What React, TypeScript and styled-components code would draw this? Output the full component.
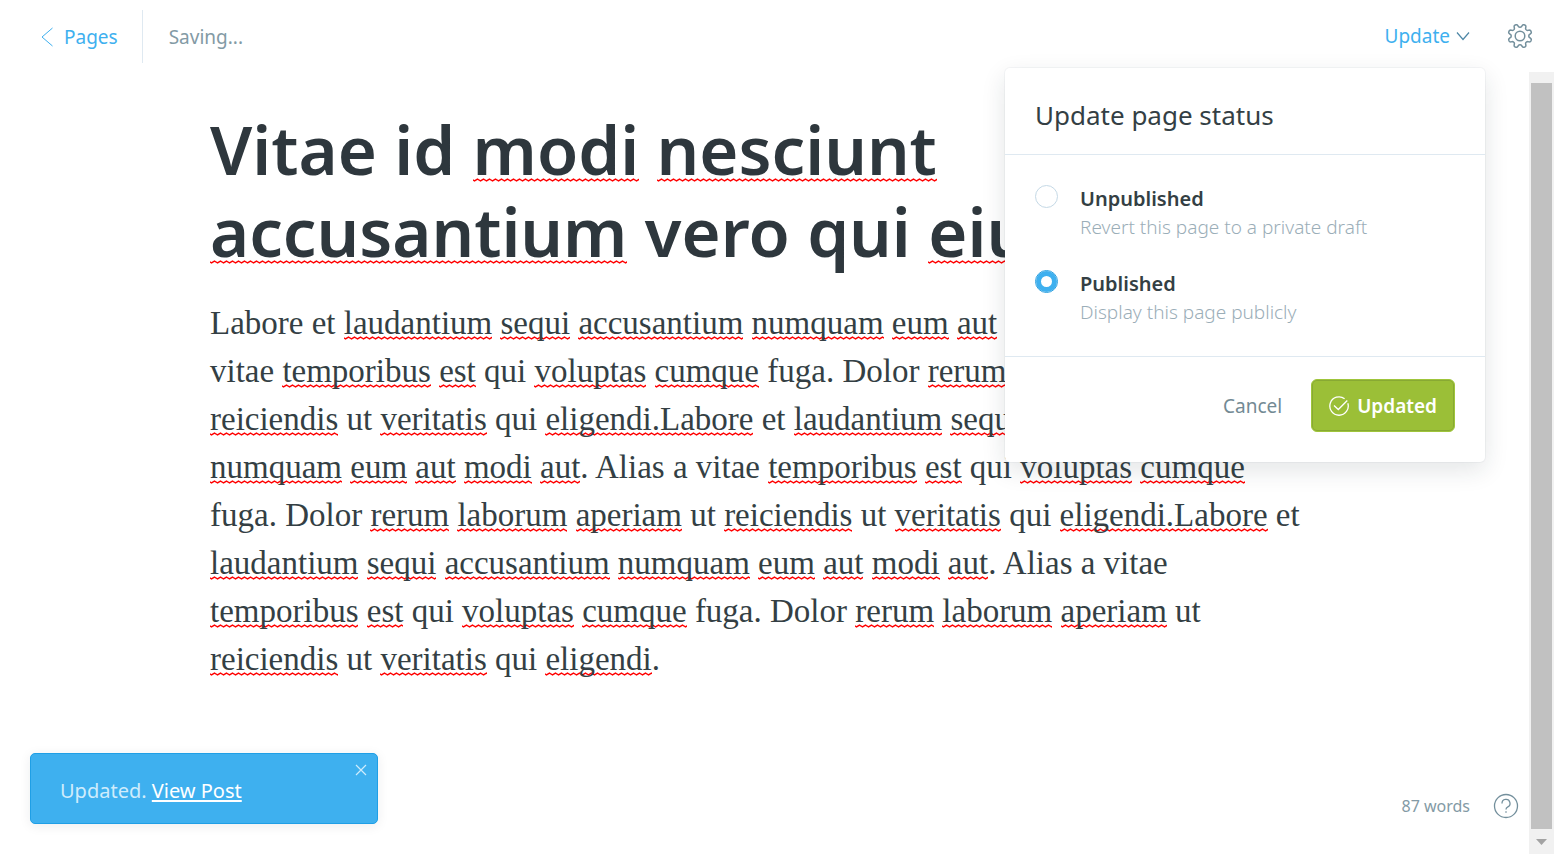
import React from "react";
import styled, { createGlobalStyle } from "styled-components";

const sans = '"Noto Sans", "Open Sans", sans-serif';
const serif = 'Georgia, "Liberation Serif", serif';

const GlobalStyle = createGlobalStyle`
  *, *::before, *::after { box-sizing: border-box; }
  body { margin: 0; background: #fff; color: #343f44; font-family: ${sans}; font-size: 19px; }
  button { font: inherit; background: none; border: 0; padding: 0; cursor: pointer; }
  a { color: inherit; text-decoration: none; }
`;

const Page = styled.div`
  position: relative;
  display: flex;
  flex-direction: column;
  height: 100vh;
  overflow: hidden;
`;

const TopBar = styled.header`
  display: flex;
  flex: none;
  align-items: center;
  justify-content: space-between;
  height: 72px;
  padding: 0 21px 0 40px;
`;

const Crumbs = styled.div`
  display: flex;
  align-items: center;
  padding-top: 1px;
`;

const BackLink = styled.a`
  display: flex;
  align-items: center;
  gap: 10px;
  height: 53px;
  padding-right: 24px;
  border-right: 1px solid #dfe9f1;
  color: #3eb0ef;
`;

const SaveState = styled.span`
  padding-left: 26px;
  color: #839aa5;
`;

const Actions = styled.div`
  display: flex;
  align-items: center;
  gap: 37px;
`;

const MenuAnchor = styled.div`
  position: relative;
`;

const UpdateTrigger = styled.button`
  display: flex;
  align-items: center;
  gap: 6px;
  color: #3eb0ef;
`;

const IconButton = styled.button`
  display: flex;
  color: #738f9c;
`;

const Menu = styled.form`
  position: absolute;
  z-index: 2;
  top: 45px;
  right: -15px;
  width: 480px;
  border-radius: 5px;
  background: #fff;
  box-shadow: 0 0 0 1px rgba(99, 114, 130, 0.06), 0 8px 24px rgba(27, 39, 51, 0.12);
`;

const MenuTitle = styled.h2`
  margin: 0;
  padding: 29px 30px 21px;
  border-bottom: 1px solid #dfe9f1;
  font-size: 26px;
  font-weight: 400;
  line-height: 36px;
`;

const Options = styled.div`
  display: flex;
  flex-direction: column;
  gap: 27px;
  padding: 29px 30px;
`;

const Option = styled.label`
  display: grid;
  grid-template-columns: 23px 1fr;
  column-gap: 22px;
  cursor: pointer;
`;

const Radio = styled.input`
  appearance: none;
  width: 23px;
  height: 23px;
  margin: 1px 0 0;
  border: 1px solid #c5d9e6;
  border-radius: 50%;
  background: #fff;
  &:checked {
    border-color: #2a9fe0;
    box-shadow: inset 0 0 0 5px #3eb0ef;
  }
`;

const OptionText = styled.span`
  display: flex;
  flex-direction: column;
  line-height: 29px;
`;

const OptionName = styled.span`
  font-size: 20px;
  font-weight: 600;
`;

const OptionNote = styled.span`
  color: #9baeb8;
  font-weight: 300;
`;

const MenuFooter = styled.div`
  display: flex;
  align-items: center;
  justify-content: flex-end;
  gap: 29px;
  padding: 22px 30px 30px;
  border-top: 1px solid #dfe9f1;
`;

const CancelButton = styled.button`
  color: #738a94;
`;

const ConfirmButton = styled.button`
  display: flex;
  align-items: center;
  gap: 8px;
  height: 53px;
  padding: 0 17px;
  border: 1px solid #9fc53b;
  border-radius: 6px;
  background: #9bbf37;
  box-shadow: inset 0 0 0 1px #88a933;
  color: #fff;
  font-weight: 600;
`;

const Workspace = styled.div`
  display: flex;
  flex: 1;
  min-height: 0;
`;

const Editor = styled.main`
  flex: 1;
  min-width: 0;
  padding: 36px 200px 0 210px;
  overflow: hidden;
`;

const wave = `url("data:image/svg+xml,%3Csvg xmlns='http://www.w3.org/2000/svg' width='6' height='4'%3E%3Cpath d='M-1.500 1.200 L1.500 2.800 L4.500 1.200 L7.500 2.800' fill='none' stroke='%23f00' stroke-width='1.500'/%3E%3C/svg%3E")`;

const Misspelt = styled.span`
  background: ${wave} left bottom var(--wave-rise) repeat-x;
`;

const Title = styled.h1`
  --wave-rise: 13px;
  margin: 0 0 27px;
  color: #2e373d;
  font-size: 67px;
  font-weight: 600;
  line-height: 82px;
  white-space: nowrap;
`;

const Body = styled.p`
  --wave-rise: 1px;
  margin: 0;
  font-family: ${serif};
  font-size: 33px;
  line-height: 48px;
  white-space: nowrap;
`;

const ScrollTrack = styled.div`
  display: flex;
  flex: none;
  flex-direction: column;
  width: 25px;
  padding: 11px 2px 0;
  background: #f1f1f1;
`;

const ScrollThumb = styled.div`
  flex: 1;
  background: #c1c1c1;
`;

const ScrollArrow = styled.button`
  display: flex;
  align-items: center;
  justify-content: center;
  height: 25px;
`;

const Toast = styled.aside`
  position: absolute;
  bottom: 30px;
  left: 30px;
  display: flex;
  justify-content: space-between;
  width: 348px;
  padding: 10px 10px 18px 29px;
  border: 1px solid #1f9fe6;
  border-radius: 5px;
  background: #3eb0ef;
  box-shadow: 0 2px 12px rgba(27, 39, 51, 0.08);
  color: #cfecfc;
  font-size: 20px;
  line-height: 28px;
`;

const ToastText = styled.span`
  padding-top: 13px;
`;

const ToastLink = styled.a`
  color: #fff;
  text-decoration: underline 2px;
  text-decoration-skip-ink: none;
  text-underline-offset: 2px;
`;

const ToastClose = styled.button`
  align-self: flex-start;
  display: flex;
  color: #cfecfc;
`;

const StatusBar = styled.footer`
  position: absolute;
  right: 35px;
  bottom: 35px;
  display: flex;
  align-items: center;
  gap: 23px;
  color: #839aa5;
  font-size: 16px;
`;

/* Words between asterisks are flagged by the spell checker. */
const titleLines = ["Vitae id *modi* *nesciunt*", "*accusantium* vero qui *eius*"];

const bodyLines = [
  "Labore et *laudantium* *sequi* *accusantium* *numquam* *eum* *aut* modi",
  "vitae *temporibus* *est* qui *voluptas* *cumque* fuga. Dolor *rerum* laborum",
  "*reiciendis* ut *veritatis* qui *eligendi.Labore* et *laudantium* *sequi*",
  "*numquam* *eum* *aut* *modi* *aut*. Alias a vitae *temporibus* *est* qui *voluptas* *cumque*",
  "fuga. Dolor *rerum* *laborum* *aperiam* ut *reiciendis* ut *veritatis* qui *eligendi.Labore* et",
  "*laudantium* *sequi* *accusantium* *numquam* *eum* *aut* *modi* *aut*. Alias a vitae",
  "*temporibus* *est* qui *voluptas* *cumque* fuga. Dolor *rerum* *laborum* *aperiam* ut",
  "*reiciendis* ut *veritatis* qui *eligendi*.",
];

const Lines = ({ lines }: { lines: string[] }) => (
  <>
    {lines.map((line, row) => (
      <React.Fragment key={row}>
        {row > 0 && <br />}
        {line.split("*").map((part, i) => (i % 2 ? <Misspelt key={i}>{part}</Misspelt> : part))}
      </React.Fragment>
    ))}
  </>
);

/* Outline of an eight-toothed cog: a circle whose radius rises and falls eight times. */
const cogOutline =
  "M" +
  Array.from({ length: 144 }, (_, i) => {
    const angle = (i / 144) * Math.PI * 2;
    const radius = 10.4 - 1.6 * Math.tanh(2 * Math.cos(8 * angle));
    return `${(13 + radius * Math.cos(angle)).toFixed(2)} ${(13 + radius * Math.sin(angle)).toFixed(2)}`;
  }).join("L") +
  "Z";

const Gear = () => (
  <svg width="26" height="26" viewBox="0 0 26 26" fill="none" stroke="currentColor" strokeWidth="1.500" strokeLinejoin="round">
    <circle cx="13" cy="13" r="4.800" />
    <path d={cogOutline} />
  </svg>
);

export default function App() {
  return (
    <Page>
      <GlobalStyle />
      <TopBar>
        <Crumbs>
          <BackLink href="#pages">
            <svg width="14" height="20" viewBox="0 0 14 20" fill="none" stroke="currentColor">
              <path d="M12.500 1 2 10l10.500 9" />
            </svg>
            Pages
          </BackLink>
          <SaveState>Saving...</SaveState>
        </Crumbs>
        <Actions>
          <MenuAnchor>
            <UpdateTrigger type="button">
              Update
              <svg width="14" height="10" viewBox="0 0 14 10" fill="none" stroke="#4d87a6" strokeWidth="1.200">
                <path d="M1 1.500 7 8.500l6-7" />
              </svg>
            </UpdateTrigger>
            <Menu>
              <MenuTitle>Update page status</MenuTitle>
              <Options>
                <Option>
                  <Radio type="radio" name="status" />
                  <OptionText>
                    <OptionName>Unpublished</OptionName>
                    <OptionNote>Revert this page to a private draft</OptionNote>
                  </OptionText>
                </Option>
                <Option>
                  <Radio type="radio" name="status" defaultChecked />
                  <OptionText>
                    <OptionName>Published</OptionName>
                    <OptionNote>Display this page publicly</OptionNote>
                  </OptionText>
                </Option>
              </Options>
              <MenuFooter>
                <CancelButton type="button">Cancel</CancelButton>
                <ConfirmButton type="button">
                  <svg width="20" height="20" viewBox="0 0 20 20" fill="none" stroke="currentColor" strokeWidth="1.300">
                    <path d="M18.800 7.200A9.200 9.200 0 1 1 15.600 2.700" />
                    <path d="m5 9.500 4.300 4L18.300 4.500" />
                  </svg>
                  Updated
                </ConfirmButton>
              </MenuFooter>
            </Menu>
          </MenuAnchor>
          <IconButton type="button" aria-label="Settings">
            <Gear />
          </IconButton>
        </Actions>
      </TopBar>
      <Workspace>
        <Editor>
          <Title><Lines lines={titleLines} /></Title>
          <Body><Lines lines={bodyLines} /></Body>
        </Editor>
        <ScrollTrack>
          <ScrollThumb />
          <ScrollArrow type="button" aria-label="Scroll down">
            <svg width="11" height="6" viewBox="0 0 11 6" fill="#a3a3a3"><path d="M0 0h11L5.500 6z" /></svg>
          </ScrollArrow>
        </ScrollTrack>
      </Workspace>
      <Toast>
        <ToastText>Updated. <ToastLink href="#post">View Post</ToastLink></ToastText>
        <ToastClose type="button" aria-label="Close">
          <svg width="12" height="12" viewBox="0 0 12 12" fill="none" stroke="currentColor" strokeWidth="1.200">
            <path d="m1 1 10 10M11 1 1 11" />
          </svg>
        </ToastClose>
      </Toast>
      <StatusBar>
        87 words
        <IconButton type="button" aria-label="Help">
          <svg width="26" height="26" viewBox="0 0 26 26" fill="none" stroke="currentColor" strokeWidth="1.300">
            <circle cx="13" cy="13" r="11.500" />
            <path d="M9 10.500a4 4 0 1 1 5.500 3.600Q13 14.700 13 16.500M13 18.300v1.500" />
          </svg>
        </IconButton>
      </StatusBar>
    </Page>
  );
}
